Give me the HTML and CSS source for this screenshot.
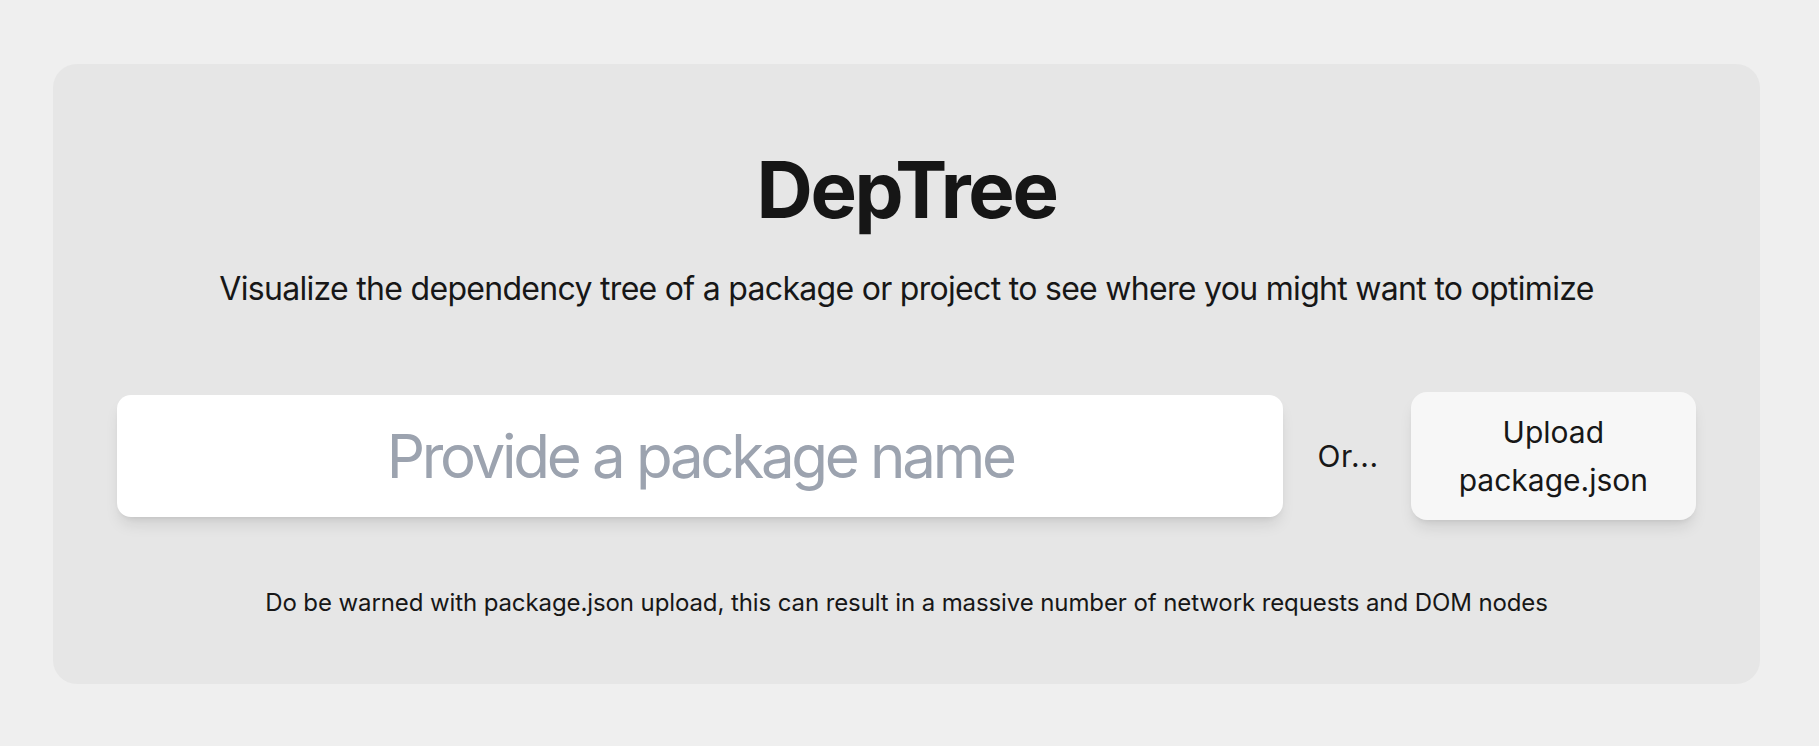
FILE: index.html
```html
<!DOCTYPE html>
<html lang="en">
<head>
<meta charset="utf-8">
<title>DepTree</title>
<link rel="stylesheet" href="styles.css">
</head>
<body>
<main class="card">
  <h1 class="title">DepTree</h1>
  <p class="subtitle">Visualize the dependency tree of a package or project to see where you might want to optimize</p>
  <div class="row">
    <input class="search" type="text" placeholder="Provide a package name">
    <span class="or">Or...</span>
    <button class="upload" type="button">Upload<br>package.json</button>
  </div>
  <p class="warning">Do be warned with package.json upload, this can result in a massive number of network requests and DOM nodes</p>
</main>
</body>
</html>
```
FILE: styles.css
```css
html, body {
  margin: 0;
  padding: 0;
}
body {
  background: #efefef;
  font-family: Inter, "Noto Sans", sans-serif;
  color: #171717;
  padding: 64px 59px 62px 53px;
}
.card {
  background: #e6e6e6;
  border-radius: 24px;
  height: 620px;
  box-sizing: border-box;
  padding: 87px 64px 0 64px;
  display: flex;
  flex-direction: column;
}
.title {
  margin: 0;
  font-size: 78px;
  line-height: 78px;
  font-weight: 700;
  letter-spacing: -2.3px;
  text-align: center;
  color: #161616;
}
.subtitle {
  margin: 40px 0 0 0;
  font-size: 32px;
  line-height: 40px;
  letter-spacing: -0.7px;
  text-align: center;
}
.row {
  margin-top: 83px;
  display: flex;
  align-items: center;
  height: 128px;
}
.search {
  flex: 1;
  min-width: 0;
  height: 122px;
  box-sizing: border-box;
  border: none;
  border-radius: 14px;
  background: #fff;
  font-family: inherit;
  font-size: 60px;
  letter-spacing: -3.3px;
  text-align: center;
  color: #171717;
  outline: none;
  box-shadow: 0 10px 15px -3px rgba(0,0,0,0.1), 0 4px 6px -4px rgba(0,0,0,0.1);
}
.search::placeholder {
  color: #9ca3af;
}
.or {
  margin: 0 32px 0 34px;
  font-size: 30px;
  letter-spacing: 0.6px;
}
.upload {
  height: 128px;
  border: none;
  border-radius: 16px;
  background: #f7f7f7;
  font-family: inherit;
  font-size: 30px;
  line-height: 48px;
  color: #171717;
  padding: 0 48px;
  box-shadow: 0 10px 15px -3px rgba(0,0,0,0.1), 0 4px 6px -4px rgba(0,0,0,0.1);
}
.warning {
  margin: 67px 0 0 0;
  font-size: 24px;
  line-height: 32px;
  letter-spacing: -0.1px;
  text-align: center;
}
```
